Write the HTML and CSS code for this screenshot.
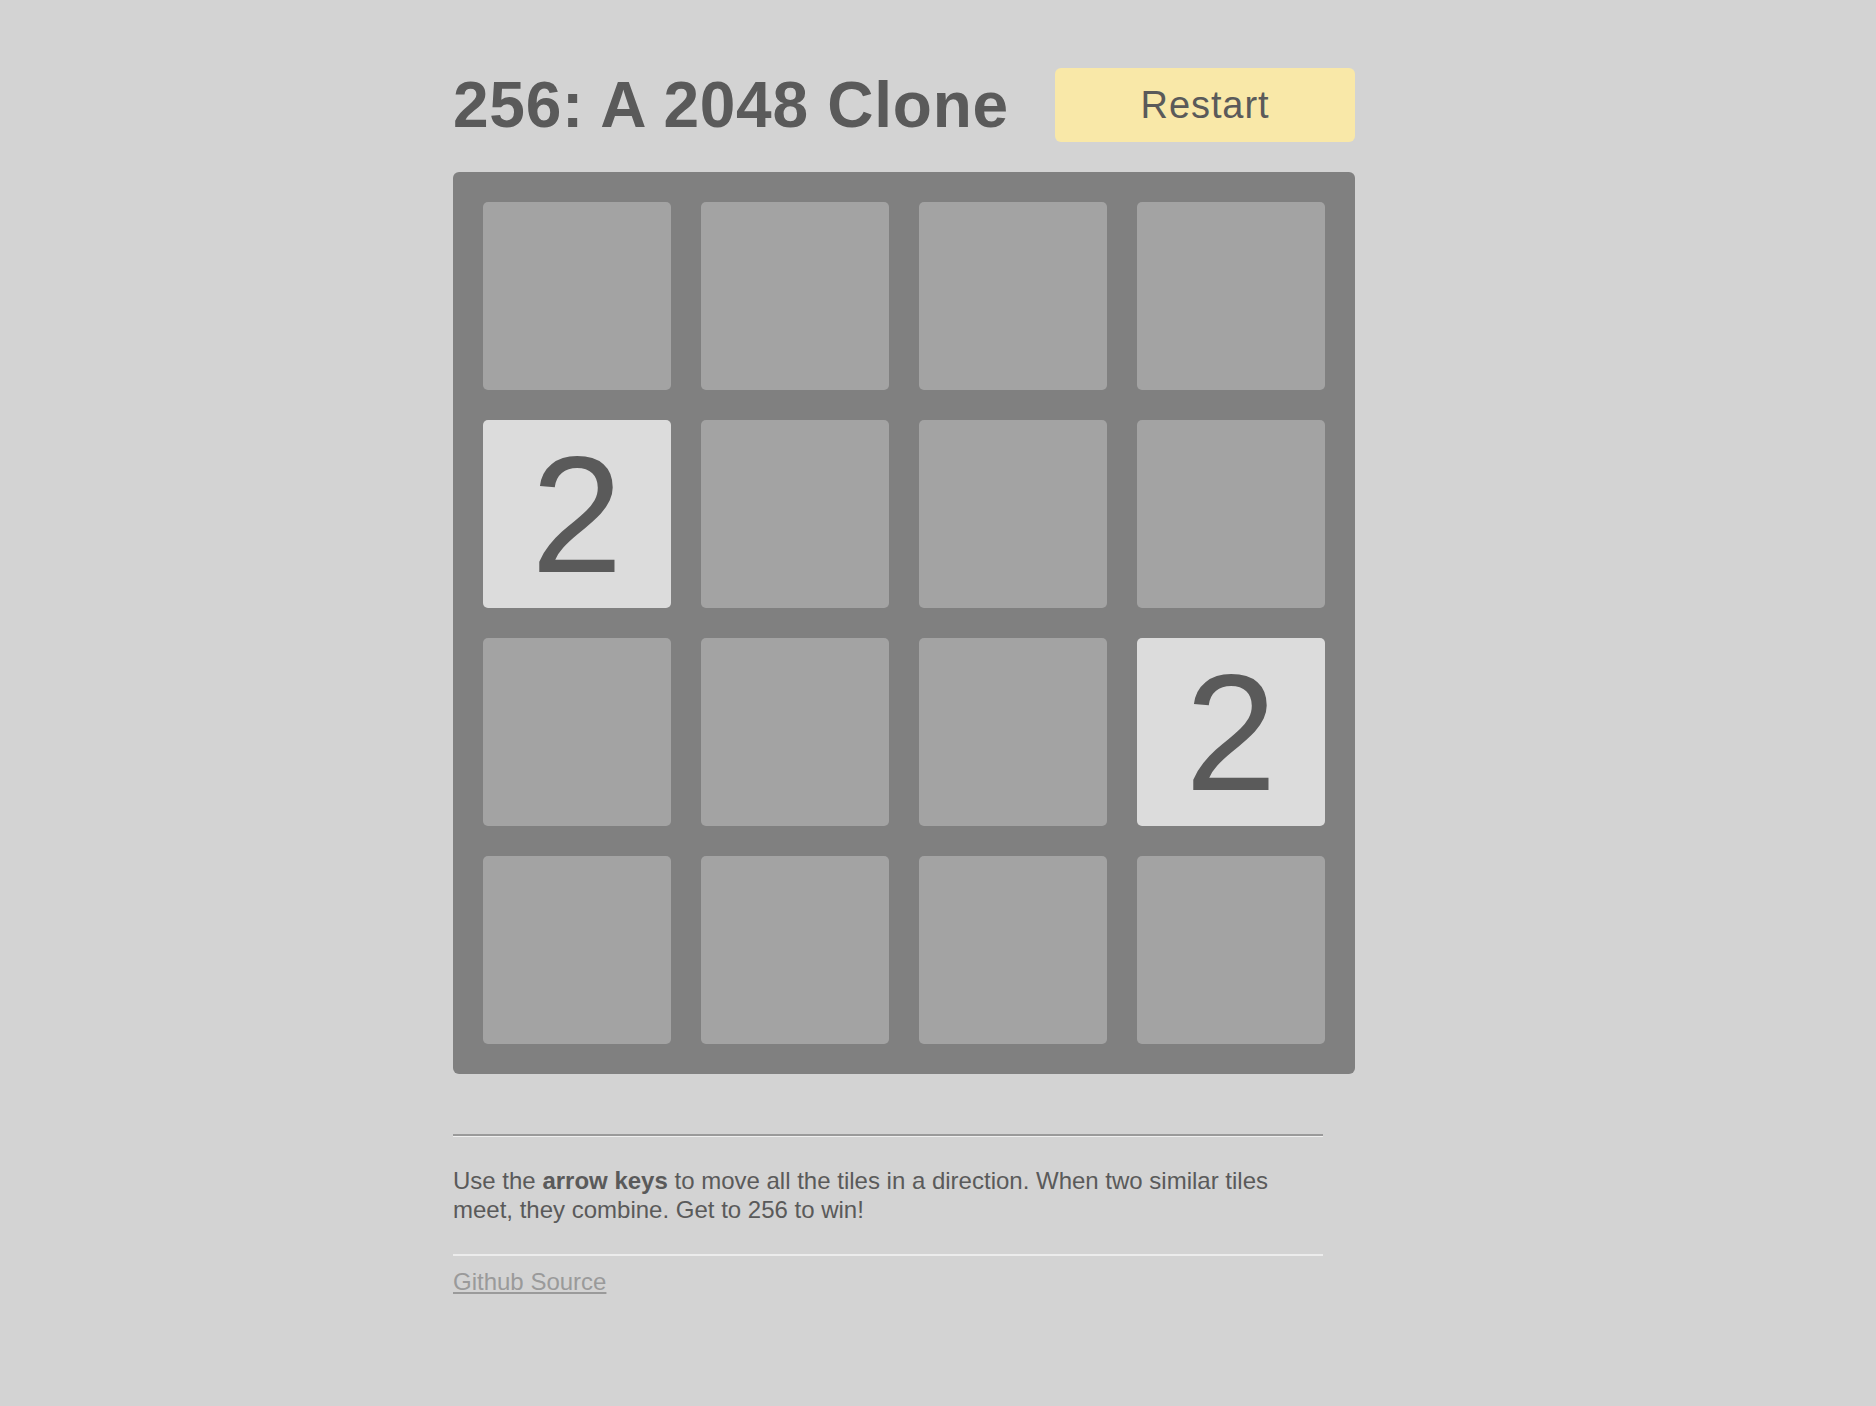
FILE: index.html
```html
<!DOCTYPE html>
<html lang="en">
<head>
<meta charset="utf-8">
<title>256: A 2048 Clone</title>
<link rel="stylesheet" href="styles.css">
</head>
<body>
<div class="page">
  <header class="header">
    <h1 class="title">256: A 2048 Clone</h1>
    <button class="restart" type="button">Restart</button>
  </header>
  <div class="board">
    <div class="tile"></div>
    <div class="tile"></div>
    <div class="tile"></div>
    <div class="tile"></div>
    <div class="tile filled">2</div>
    <div class="tile"></div>
    <div class="tile"></div>
    <div class="tile"></div>
    <div class="tile"></div>
    <div class="tile"></div>
    <div class="tile"></div>
    <div class="tile filled">2</div>
    <div class="tile"></div>
    <div class="tile"></div>
    <div class="tile"></div>
    <div class="tile"></div>
  </div>
  <section class="info">
    <hr class="rule rule-top">
    <p class="help">Use the <strong>arrow keys</strong> to move all the tiles in a direction. When two similar tiles meet, they combine. Get to 256 to win!</p>
    <hr class="rule rule-bottom">
    <a class="source" href="#">Github Source</a>
  </section>
</div>
</body>
</html>
```

FILE: styles.css
```css
html, body {
  margin: 0;
  padding: 0;
  background: #d3d3d3;
}

body {
  font-family: "Liberation Sans", Arial, Helvetica, sans-serif;
  color: #5a5a5a;
}

.page {
  width: 970px;
  margin: 0 auto;
  padding-top: 68px;
  padding-bottom: 100px;
}

.header {
  width: 902px;
  height: 74px;
  display: flex;
  align-items: center;
  justify-content: space-between;
}

.title {
  margin: 0;
  font-size: 64px;
  font-weight: bold;
  line-height: 74px;
  letter-spacing: 0.75px;
  color: #5a5a5a;
}

.restart {
  width: 300px;
  height: 74px;
  margin: 0;
  padding: 0;
  border: none;
  border-radius: 6px;
  background: #f9e8a8;
  color: #5a5a5a;
  font-family: "Liberation Sans", Arial, Helvetica, sans-serif;
  font-size: 38px;
  line-height: 74px;
  letter-spacing: 0.9px;
}

.board {
  margin-top: 30px;
  width: 902px;
  box-sizing: border-box;
  padding: 30px;
  background: #808080;
  border-radius: 6px;
  display: grid;
  grid-template-columns: repeat(4, 188px);
  grid-auto-rows: 188px;
  gap: 30px;
}

.tile {
  background: #a3a3a3;
  border-radius: 5px;
  display: flex;
  align-items: center;
  justify-content: center;
  font-size: 165px;
  line-height: 1;
  color: #5a5a5a;
}

.tile.filled {
  background: #dcdcdc;
  padding-top: 3px;
  box-sizing: border-box;
}

.info {
  width: 870px;
  margin-top: 60px;
}

.rule {
  margin: 0;
  height: 0;
  border: none;
}

.rule-top {
  border-top: 2px solid #9a9a9a;
  border-bottom: 1px solid #efefef;
}

.rule-bottom {
  margin-top: 30px;
  border-top: 2px solid #ececec;
}

.help {
  margin: 29px 0 0;
  font-size: 24px;
  line-height: 29px;
  color: #5a5a5a;
}

.help strong {
  font-weight: bold;
}

.source {
  display: inline-block;
  margin-top: 11px;
  font-size: 24px;
  line-height: 29px;
  color: #9a9a9a;
  text-decoration: underline;
}
```
